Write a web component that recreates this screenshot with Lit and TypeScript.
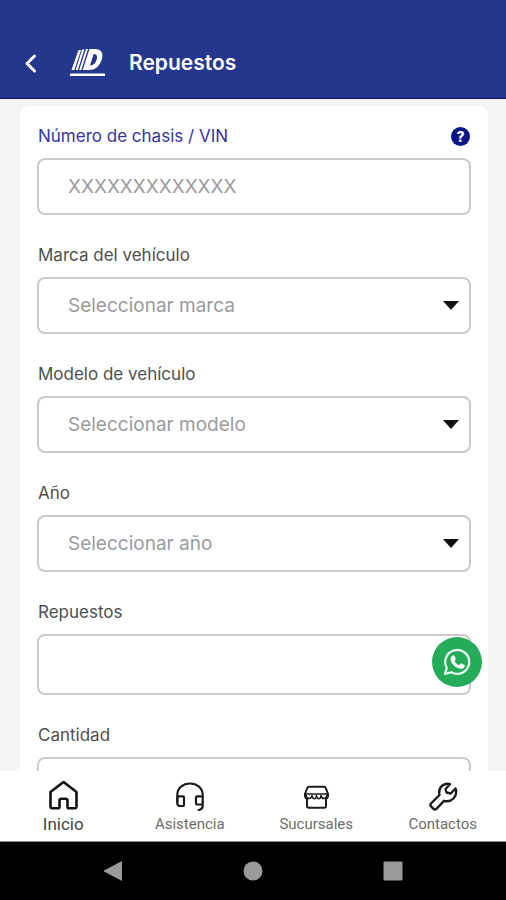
import { LitElement, html, css, svg } from "lit";
import { customElement, state } from "lit/decorators.js";

const caret = html`<svg class="caret" viewBox="0 0 16 10" aria-hidden="true"><path d="M0 0h16L8 9z" /></svg>`;

const tabs = [
  {
    name: "Inicio",
    icon: svg`<path d="M15.500 2 28.500 12v14.500q0 1.700-1.700 1.700H21q-1.500 0-1.500-1.500v-5.900q0-2-2-2h-4q-2 0-2 2v5.900q0 1.500-1.500 1.500H4.200q-1.700 0-1.700-1.700V12z"/>`,
    width: 2.6,
  },
  {
    name: "Asistencia",
    icon: svg`<path d="M2.300 22V15C2.300 8 8 3.500 15 3.500S27.700 8 27.700 15v7"/><path d="M2.500 16.300H8q1 0 1 1v7.200q0 1.500-1.500 1.500H5q-2.700 0-2.700-3zM27.500 16.300H22q-1 0-1 1v5.700q0 1.500 1.500 1.500h5.200M27.700 22v3.500q0 4-4 4.500"/>`,
    width: 2.2,
  },
  {
    name: "Sucursales",
    icon: svg`<path d="M8 6.800h15q1.500 0 1.800 1.200l2.200 6v1.500q0 2.500-1.800 3M8 6.800q-1.500 0-1.800 1.200L4 14v1.500q0 2.500 1.800 3"/><path d="M4 14h23" stroke-width="1.600"/><path d="M5 15q0 3.500 2.800 3.500T11 15.500q.5 3.200 2.300 3.200t2.200-3.200q.5 3.200 2.300 3.200T20 15.500q.5 3 2.800 3T26 15" stroke-width="1.600"/><path d="M6 18.500V26q0 1.800 1.800 1.800h15.400q1.800 0 1.800-1.800v-7.500"/>`,
    width: 2,
  },
  {
    name: "Contactos",
    icon: svg`<path d="M22 4.200Q18 2.800 14.500 5.500 10 9 11.500 15L3 23.500q-1.200 1.400 0 2.800l2.500 2.500q1.500 1.200 2.900 0L16 20.800q5.500 1.700 9.500-2.300 4-4.500 2-10L22.800 13.500 18.500 12.500 17.500 9z"/>`,
    width: 2.4,
  },
];

@customElement("app-root")
export class AppRoot extends LitElement {
  @state() private active = "Inicio";

  static styles = css`
    :host {
      display: flex;
      flex-direction: column;
      height: 100vh;
      background: #f4f4f4;
      font-family: Inter, "Liberation Sans", sans-serif;
      color: #4f4f4f;
    }
    * { box-sizing: border-box; }
    button {
      border: 0;
      padding: 0;
      margin: 0;
      background: none;
      color: inherit;
      font: inherit;
      cursor: pointer;
    }
    svg { display: block; }
    header {
      flex: none;
      display: flex;
      align-items: center;
      height: 99px;
      padding: 28px 20px 0;
      background: #24378d;
      border-bottom: 1px solid #0e1670;
      color: #fff;
    }
    .back { width: 24px; height: 24px; }
    .back svg { width: 24px; height: 24px; fill: none; stroke: #fff; stroke-width: 3; stroke-linecap: round; stroke-linejoin: round; }
    .brand { width: 36px; height: 30px; margin: 0 24px 0 25px; fill: #fff; }
    h1 { margin: 0; font-size: 21px; line-height: 24px; font-weight: 600; }
    .body { position: relative; flex: 1; min-height: 0; display: flex; flex-direction: column; }
    .scroll { flex: 1; min-height: 0; overflow: auto; scrollbar-width: none; padding: 7px 18px 0 20px; }
    form {
      display: flex;
      flex-direction: column;
      gap: 30px;
      padding: 20px 17px 30px;
      background: #fff;
      border-radius: 10px;
    }
    .field { display: flex; flex-direction: column; gap: 12px; }
    .head { display: flex; justify-content: space-between; align-items: center; height: 20px; padding: 0 1px; }
    label { font-size: 17px; line-height: 20px; }
    .accent label { color: #35359a; }
    .help { width: 19px; height: 19px; border-radius: 50%; background: #0a1585; color: #fff; font-size: 14px; line-height: 19px; font-weight: 800; }
    .box { position: relative; }
    input, select, textarea {
      display: block;
      width: 100%;
      height: 57px;
      margin: 0;
      padding: 0 29px;
      border: 2px solid #cacaca;
      border-radius: 8px;
      background: #fff;
      color: #9b9b9b;
      font-family: inherit;
      font-size: 19px;
      outline: none;
      appearance: none;
      resize: none;
    }
    textarea { height: 61px; padding: 16px 29px; }
    input::placeholder { color: #9b9b9b; opacity: 1; }
    .caret { position: absolute; right: 12px; top: 50%; width: 16px; height: 10px; margin-top: -5px; fill: #111; pointer-events: none; }
    .chat {
      position: absolute;
      right: 24px;
      bottom: 84px;
      width: 50px;
      height: 50px;
      border-radius: 50%;
      background: #25ac5b;
      display: grid;
      place-items: center;
    }
    .chat svg { width: 28px; height: 28px; }
    .tabs { flex: none; display: grid; grid-template-columns: repeat(4, 1fr); height: 71px; background: #fff; border-bottom: 1px solid #8a8a8a; }
    .tab { display: flex; flex-direction: column; align-items: center; padding-top: 9px; gap: 3px; font-family: Roboto, sans-serif; font-size: 15px; line-height: 20px; color: #6c6c6c; }
    .tab svg { width: 30px; height: 31px; fill: none; stroke: #1c1c1c; stroke-linejoin: round; stroke-linecap: round; }
    .tab.on { font-size: 17px; color: #444; }
    .tab.on svg { stroke: #111; }
    .system { flex: none; display: flex; justify-content: center; align-items: center; gap: 120px; height: 58px; background: #000; }
    .system svg { width: 20px; height: 22px; fill: #9a9a9a; }
  `;

  private select(id: string, label: string, hint: string) {
    return html`<div class="field">
      <div class="head"><label for=${id}>${label}</label></div>
      <div class="box"><select id=${id}><option>${hint}</option></select>${caret}</div>
    </div>`;
  }

  render() {
    return html`
      <header>
        <button class="back" aria-label="Volver"><svg viewBox="0 0 24 24"><path d="M14.500 5 7 12.500 14.500 20" /></svg></button>
        <svg class="brand" viewBox="0 0 36 30" aria-hidden="true">
          <path d="M9.500 2h2.600L5.300 22H2.500zM13.200 1.500h2.200L8.800 22H6.600zM17 1h2l-6.700 21h-2.200z" />
          <path fill-rule="evenodd" d="M20.500 1h6.500q7 .5 6.300 7.800C32.500 16 27.500 22 20.500 22h-6.800zM24.600 6 21 17.500c4 0 6.500-3.500 7-7.700.3-2.500-.8-3.800-3.400-3.800z" />
          <path d="M1 25.500h35v2.500H1z" />
        </svg>
        <h1>Repuestos</h1>
      </header>
      <div class="body">
        <main class="scroll">
          <form>
            <div class="field accent">
              <div class="head">
                <label for="vin">Número de chasis / VIN</label>
                <button class="help" type="button" aria-label="Ayuda">?</button>
              </div>
              <input id="vin" placeholder="XXXXXXXXXXXXX" />
            </div>
            ${this.select("marca", "Marca del vehículo", "Seleccionar marca")}
            ${this.select("modelo", "Modelo de vehículo", "Seleccionar modelo")}
            ${this.select("anio", "Año", "Seleccionar año")}
            <div class="field">
              <div class="head"><label for="repuestos">Repuestos</label></div>
              <textarea id="repuestos"></textarea>
            </div>
            <div class="field">
              <div class="head"><label for="cantidad">Cantidad</label></div>
              <input id="cantidad" />
            </div>
          </form>
        </main>
        <button class="chat" aria-label="WhatsApp">
          <svg viewBox="0 0 28 28">
            <path d="M2 26l1.800-6.200A12 12 0 1 1 8.300 24.300z" fill="none" stroke="#e9fff1" stroke-width="2.200" stroke-linejoin="round" />
            <path d="M9.800 7.500c.7-.3 1.500-.1 1.800.6l1.100 2.500c.2.500.1.900-.2 1.300l-1 1.200c1 2 2.500 3.300 4.600 4.200l1.300-1.500c.3-.4.8-.5 1.200-.3l2.500 1.200c.6.3.8.8.6 1.500-.6 2-2.300 2.900-4.300 2.600-5.200-.9-9.400-5-9.800-9.500-.1-1.700.8-3.200 2.200-3.800z" fill="#fff" />
          </svg>
        </button>
      </div>
      <nav class="tabs">
        ${tabs.map(
          (t) => html`<button class="tab ${t.name === this.active ? "on" : ""}" @click=${() => (this.active = t.name)}>
            <svg viewBox="0 0 30 31" stroke-width=${t.width} aria-hidden="true">${t.icon}</svg><span>${t.name}</span>
          </button>`
        )}
      </nav>
      <div class="system">
        <button aria-label="Atrás"><svg viewBox="0 0 20 22"><path d="M19 1v20L1 11.500v-1z" /></svg></button>
        <button aria-label="Inicio del sistema"><svg viewBox="0 0 20 22"><circle cx="10" cy="11" r="9.500" /></svg></button>
        <button aria-label="Recientes"><svg viewBox="0 0 20 22"><rect x="0.500" y="1.500" width="19" height="19" rx="1" /></svg></button>
      </div>
    `;
  }
}
